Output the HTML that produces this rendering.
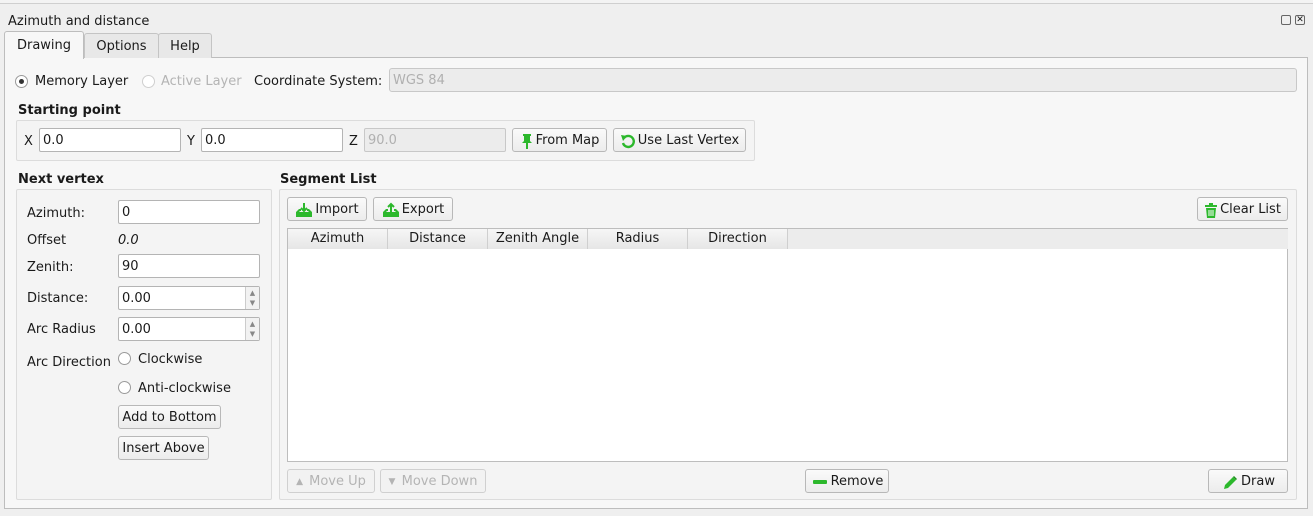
<!DOCTYPE html>
<html><head><meta charset="utf-8"><style>
*{box-sizing:border-box}
body{margin:0;width:1313px;height:516px;background:#efefef;font-family:"DejaVu Sans","Liberation Sans",sans-serif;font-size:13px;color:#1a1a1a;position:relative;overflow:hidden}
.a{position:absolute;white-space:nowrap}
.t{position:absolute;white-space:nowrap;line-height:16px;margin-top:2px}
.inp{position:absolute;background:#fff;border:1px solid #b4b4b4;border-radius:2px;padding-left:3px;line-height:24px;height:24px;white-space:nowrap}
.dis{background:#ececec;color:#b0b0b0;border-color:#c8c8c8}
.btn{position:absolute;white-space:nowrap;background:linear-gradient(#fafafa,#ececec);border:1px solid #b8b8b8;border-radius:3px;height:24px;line-height:20px;padding:2px 4px 0;display:flex;align-items:center;justify-content:center;gap:2px}
.btn.d{color:#b4b4b4;border-color:#d0d0d0;background:#f2f2f2}
.radio{position:absolute;width:13px;height:13px;border:1px solid #9a9a9a;border-radius:50%;background:#fff;margin-top:2px}
.b{font-weight:bold}
.box{position:absolute;border:1px solid #dcdcdc;border-radius:2px;background:#f4f4f4}
.th{position:absolute;top:0;height:20px;line-height:20px;text-align:center;border-right:1px solid #cfcfcf;background:linear-gradient(#f6f6f6,#e6e6e6);width:100px}
.spin{position:absolute;right:0;top:0;width:14px;height:100%;border-left:1px solid #ccc;background:#f2f2f2;font-size:7px;color:#888;line-height:10px;text-align:center;padding-top:1px}
</style></head><body>
<div class="a" style="left:0;top:0;width:1313px;height:4px;border-bottom:1px solid #cfcfcf;background:#f3f3f3"></div>
<div class="t" style="left:8px;top:12px">Azimuth and distance</div>
<div class="a" style="left:1281px;top:15px;width:10px;height:10px;border:1px solid #666;border-radius:2px"></div>
<div class="a" style="left:1295px;top:15px;width:10px;height:10px;border:1px solid #666;border-radius:2px;font-size:9px;line-height:8px;text-align:center">✕</div>

<div class="a" style="left:4px;top:57px;width:1304px;height:452px;border:1px solid #bdbdbd;background:#f7f7f7"></div>
<div class="a" style="left:84px;top:33px;width:75px;height:25px;border:1px solid #c4c4c4;border-bottom:none;background:#e8e8e8;border-radius:3px 3px 0 0;text-align:center;line-height:25px">Options</div>
<div class="a" style="left:158px;top:33px;width:54px;height:25px;border:1px solid #c4c4c4;border-bottom:none;background:#e8e8e8;border-radius:3px 3px 0 0;text-align:center;line-height:25px">Help</div>
<div class="a" style="left:4px;top:31px;width:80px;height:28px;border:1px solid #bdbdbd;border-bottom:none;background:#f7f7f7;border-radius:3px 3px 0 0;text-align:center;line-height:27px">Drawing</div>

<div class="radio" style="left:15px;top:73px"><div style="position:absolute;left:3px;top:3px;width:5px;height:5px;border-radius:50%;background:#333"></div></div>
<div class="t" style="left:35px;top:72px">Memory Layer</div>
<div class="radio" style="left:142px;top:73px;border-color:#cfcfcf"></div>
<div class="t" style="left:161px;top:72px;color:#b4b4b4">Active Layer</div>
<div class="t" style="left:254px;top:72px">Coordinate System:</div>
<div class="inp dis" style="left:389px;top:68px;width:908px;border-radius:3px">WGS 84</div>

<div class="t b" style="left:18px;top:101px">Starting point</div>
<div class="box" style="left:16px;top:120px;width:739px;height:41px"></div>
<div class="t" style="left:24px;top:132px">X</div>
<div class="inp" style="left:39px;top:128px;width:142px">0.0</div>
<div class="t" style="left:187px;top:132px">Y</div>
<div class="inp" style="left:201px;top:128px;width:142px">0.0</div>
<div class="t" style="left:349px;top:132px">Z</div>
<div class="inp dis" style="left:364px;top:128px;width:142px">90.0</div>
<div class="btn" style="left:512px;top:128px;width:95px"><svg width="14" height="16" viewBox="0 0 14 16"><path d="M3 1h8v2h-1v5l2 2H2l2-2V3H3z" fill="#2cb82c"/><path d="M7 10v6" stroke="#2cb82c" stroke-width="2"/></svg>From Map</div>
<div class="btn" style="left:613px;top:128px;width:133px"><svg width="16" height="16" viewBox="0 0 16 16"><path d="M4 5A5.5 5.5 0 1 1 3 10" fill="none" stroke="#2cb82c" stroke-width="2.4"/><path d="M1 2l6 1-4 5z" fill="#2cb82c"/></svg>Use Last Vertex</div>

<div class="t b" style="left:18px;top:170px">Next vertex</div>
<div class="box" style="left:16px;top:189px;width:256px;height:311px"></div>
<div class="t" style="left:27px;top:204px">Azimuth:</div>
<div class="inp" style="left:118px;top:200px;width:142px">0</div>
<div class="t" style="left:27px;top:231px">Offset</div>
<div class="t" style="left:118px;top:231px;font-style:italic">0.0</div>
<div class="t" style="left:27px;top:258px">Zenith:</div>
<div class="inp" style="left:118px;top:254px;width:142px">90</div>
<div class="t" style="left:27px;top:289px">Distance:</div>
<div class="inp" style="left:118px;top:286px;width:142px">0.00<div class="spin">▲<br>▼</div></div>
<div class="t" style="left:27px;top:320px">Arc Radius</div>
<div class="inp" style="left:118px;top:317px;width:142px">0.00<div class="spin">▲<br>▼</div></div>
<div class="t" style="left:27px;top:353px">Arc Direction</div>
<div class="radio" style="left:118px;top:350px"></div>
<div class="t" style="left:138px;top:350px">Clockwise</div>
<div class="radio" style="left:118px;top:379px"></div>
<div class="t" style="left:138px;top:379px">Anti-clockwise</div>
<div class="btn" style="left:118px;top:405px;width:103px">Add to Bottom</div>
<div class="btn" style="left:118px;top:436px;width:91px">Insert Above</div>

<div class="t b" style="left:280px;top:170px">Segment List</div>
<div class="box" style="left:279px;top:189px;width:1018px;height:311px"></div>
<div class="btn" style="left:287px;top:197px;width:80px"><svg width="18" height="16" viewBox="0 0 18 16"><path d="M1 10l3-3h2v2H5l-1 1h10l-1-1h-1V7h2l3 3v5H1z" fill="#2cb82c"/><path d="M9 1v8M6 6l3 3 3-3" fill="none" stroke="#2cb82c" stroke-width="2"/></svg>Import</div>
<div class="btn" style="left:373px;top:197px;width:80px"><svg width="18" height="16" viewBox="0 0 18 16"><path d="M1 10l3-3h2v2H5l-1 1h10l-1-1h-1V7h2l3 3v5H1z" fill="#2cb82c"/><path d="M9 10V2M6 5l3-3 3 3" fill="none" stroke="#2cb82c" stroke-width="2"/></svg>Export</div>
<div class="btn" style="left:1197px;top:197px;width:91px"><svg width="14" height="17" viewBox="0 0 14 17"><path d="M5 1h4v2h4v2H1V3h4z" fill="#2cb82c"/><path d="M2 6h10l-1 10H3z" fill="#2cb82c"/><path d="M5 8v6M7 8v6M9 8v6" stroke="#fff" stroke-width="1"/></svg>Clear List</div>

<div class="a" style="left:287px;top:228px;width:1001px;height:234px;background:#fff;border:1px solid #bdbdbd">
<div class="th" style="left:0">Azimuth</div>
<div class="th" style="left:100px">Distance</div>
<div class="th" style="left:200px">Zenith Angle</div>
<div class="th" style="left:300px">Radius</div>
<div class="th" style="left:400px">Direction</div>
<div class="a" style="left:500px;top:0;width:500px;height:20px;background:#ececec"></div>
</div>

<div class="btn d" style="left:287px;top:469px;width:88px"><span style="font-size:9px">▲</span>&nbsp;Move Up</div>
<div class="btn d" style="left:380px;top:469px;width:106px"><span style="font-size:9px">▼</span>&nbsp;Move Down</div>
<div class="btn" style="left:805px;top:469px;width:84px"><span style="display:inline-block;width:14px;height:4px;background:#2cb82c;border-radius:1px;margin:0 2px 0 2px"></span>Remove</div>
<div class="btn" style="left:1208px;top:469px;width:80px"><svg width="18" height="16" viewBox="0 0 18 16"><path d="M3 15l1-4 8-8 3 3-8 8z" fill="#2cb82c"/><path d="M12 3l1-1 3 3-1 1z" fill="#1e8e1e"/></svg>Draw</div>
</body></html>
